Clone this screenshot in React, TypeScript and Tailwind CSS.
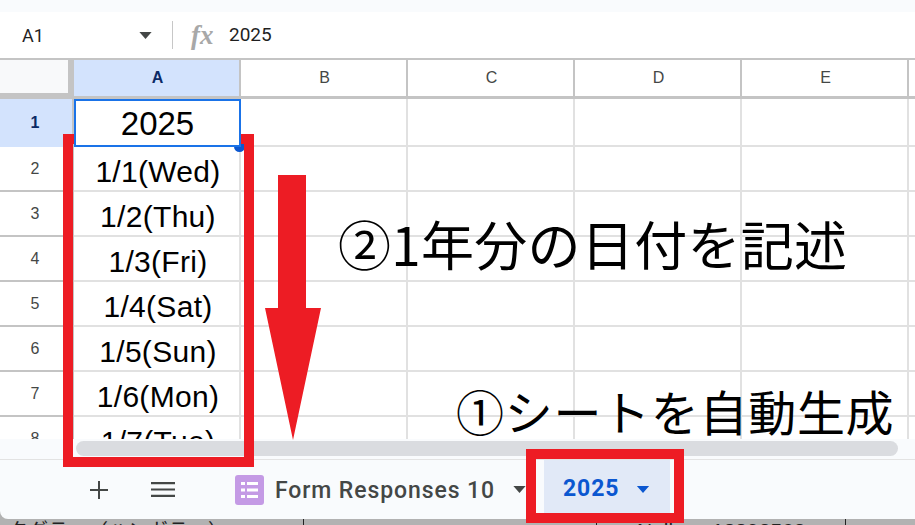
import React from "react";

const cols = ["A", "B", "C", "D", "E", ""];
const dates = ["1/1(Wed)", "1/2(Thu)", "1/3(Fri)", "1/4(Sat)", "1/5(Sun)", "1/6(Mon)", "1/7(Tue)"];

function Tri({ className }: { className: string }) {
  return (
    <svg viewBox="0 0 14 8" className={className}>
      <path d="M0 0h14L7 8z" fill="currentColor" />
    </svg>
  );
}

export default function App() {
  return (
    <div className="relative w-[915px] h-[525px] overflow-hidden bg-white flex flex-col font-['Liberation_Sans',sans-serif] text-black">
      <div className="h-3 shrink-0 bg-[#f9fbfd]" />
      {/* formula bar */}
      <div className="h-[46px] shrink-0 flex items-center bg-white">
        <span className="ml-[22px] w-[117px] text-[18px] text-[#1f1f1f] font-['Roboto',sans-serif]">A1</span>
        <Tri className="w-[13px] h-[7px] text-[#444746]" />
        <div className="ml-[20px] w-[1px] h-[28px] bg-[#c7c7c7]" />
        <span className="ml-[18px] w-[38px] text-[27px] font-bold italic text-[#a8a8a8] font-['Liberation_Serif',serif]">fx</span>
        <span className="text-[19px] text-[#1f1f1f] font-['Roboto',sans-serif]">2025</span>
      </div>
      {/* grid */}
      <div className="h-[381px] shrink-0 overflow-hidden border-t-2 border-[#c4c4c4] grid grid-cols-[74px_165px_167px_167px_167px_167px_8px] grid-rows-[39px_48px_45px_45px_45px_45px_45px_45px_45px]">
        <div className="bg-[#c4c4c4] pr-[6px] pb-[6px]">
          <div className="w-full h-full bg-[#f8f9fa]" />
        </div>
        {cols.map((c) => (
          <div
            key={c}
            className={
              c === "A"
                ? "flex items-center justify-center pl-[2px] bg-[#d3e3fd] border-b-[3px] border-[#c4c4c4] text-[16px] font-bold text-[#0b2a66]"
                : "flex items-center justify-center pl-[2px] border-l-2 border-b-[3px] border-[#c4c4c4] text-[16px] text-[#444746]"
            }
          >
            {c}
          </div>
        ))}
        {["2025", ...dates].map((d, i) => (
          <React.Fragment key={i}>
            <div
              className={
                i === 0
                  ? "flex items-center justify-center pr-[2px] bg-[#d3e3fd] border-r-2 border-[#c4c4c4] text-[16px] font-bold text-[#0b2a66]"
                  : "flex items-center justify-center pr-[2px] border-b-2 border-r-2 border-[#c4c4c4] text-[16px] text-[#444746]"
              }
            >
              {i + 1}
            </div>
            <div
              className={
                i === 0
                  ? "relative z-10 -mr-[2px] flex items-center justify-center border-2 border-[#1a73e8] bg-white text-[33px] leading-none"
                  : "flex items-center justify-center border-b-2 border-[#e1e1e1] text-[30px] tracking-[0.3px] leading-none pt-[6px] pl-[3px]"
              }
            >
              {d}
            </div>
            {[0, 1, 2, 3, 4].map((n) => (
              <div key={n} className="border-l-2 border-b-2 border-[#e1e1e1]" />
            ))}
          </React.Fragment>
        ))}
      </div>
      {/* scrollbar track */}
      <div className="h-5 shrink-0 bg-[#f9fbfd] pl-[76px] pr-[17px] pt-[2px]">
        <div className="h-[15px] rounded-full bg-[#dadce0]" />
      </div>
      <div className="h-[1px] shrink-0 bg-[#e3e3e3]" />
      {/* bottom area */}
      <div className="flex-1 relative bg-[#b2b2b2] overflow-hidden">
        <div className="absolute left-[8px] top-[55px] text-[20px] leading-[30px] whitespace-nowrap font-['Noto_Sans_CJK_JP',sans-serif] text-[#222]">タグラー（ハンガラー）</div>
        <div className="absolute left-[303px] top-0 bottom-0 w-[1px] bg-[#222]" />
        <div className="absolute left-[596px] top-0 bottom-0 w-[1px] bg-[#222]" />
        <div className="absolute left-[845px] top-0 bottom-0 w-[1px] bg-[#222]" />
        <div className="absolute left-[637px] top-[56px] text-[21px] leading-[30px] text-[#222]">Null</div>
        <div className="absolute left-[712px] top-[56px] text-[21px] leading-[30px] text-[#222]">18892563</div>
        <div className="h-[59px] flex items-center bg-[#f9fbfd] rounded-bl-lg relative">
          <svg viewBox="0 0 18 18" className="ml-[90px] w-[18px] h-[18px] text-[#444746]">
            <path d="M8 0h2v8h8v2h-8v8H8v-8H0V8h8z" fill="currentColor" />
          </svg>
          <svg viewBox="0 0 24 15" className="ml-[43px] w-[24px] h-[15px] text-[#444746]">
            <path d="M0 0h24v2.2H0zM0 6.4h24v2.2H0zM0 12.8h24V15H0z" fill="currentColor" />
          </svg>
          <svg viewBox="0 0 30 30" className="ml-[60px] w-[30px] h-[30px]">
            <rect width="29" height="30" rx="3" fill="#c49ae5" />
            <path d="M6 7h4v3H6zM12 7h11v3H12zM6 13.5h4v3H6zM12 13.5h11v3H12zM6 20h4v3H6zM12 20h11v3H12z" fill="#fff" />
          </svg>
          <span className="ml-[10px] pt-[2px] text-[23px] leading-[30px] font-medium tracking-[0.9px] text-[#444746] whitespace-nowrap font-['Roboto',sans-serif]">Form Responses 10</span>
          <Tri className="ml-[18px] w-[13px] h-[7px] text-[#444746]" />
          <div className="ml-[18px] self-stretch mb-[6px] pt-[6px] w-[126px] bg-[#e1e9f7] flex items-center pl-[19px]">
            <span className="text-[23px] font-bold tracking-[0.9px] text-[#0b57d0] font-['Roboto',sans-serif]">2025</span>
            <Tri className="ml-[17px] w-[14px] h-[7px] text-[#0b57d0]" />
          </div>
        </div>
      </div>

      {/* fill handle */}
      <div className="absolute left-[234px] top-[141px] w-[11px] h-[11px] rounded-full bg-[#0b57d0]" />

      {/* annotation frames */}
      <div className="absolute left-[63px] top-[134px] w-[191px] h-[333px] border-[10px] border-[#ed1c24]" />
      <div className="absolute left-[526px] top-[449px] w-[158px] h-[74px] border-[10px] border-[#ed1c24]" />

      {/* annotation arrow */}
      <svg viewBox="0 0 56 265" className="absolute left-[265px] top-[175px] w-[56px] h-[265px]">
        <path d="M13 0h28v133h15L28 265 0 133h13z" fill="#ed1c24" />
      </svg>

      {/* annotation text */}
      <div className="absolute left-[338px] top-[205px] text-[53px] tracking-[0.3px] leading-[76px] whitespace-nowrap font-['Noto_Sans_CJK_JP',sans-serif]">②1年分の日付を記述</div>
      <div className="absolute left-[456px] top-[372px] text-[48px] tracking-[0.7px] leading-[76px] whitespace-nowrap font-['Noto_Sans_CJK_JP',sans-serif]">①シートを自動生成</div>
    </div>
  );
}
